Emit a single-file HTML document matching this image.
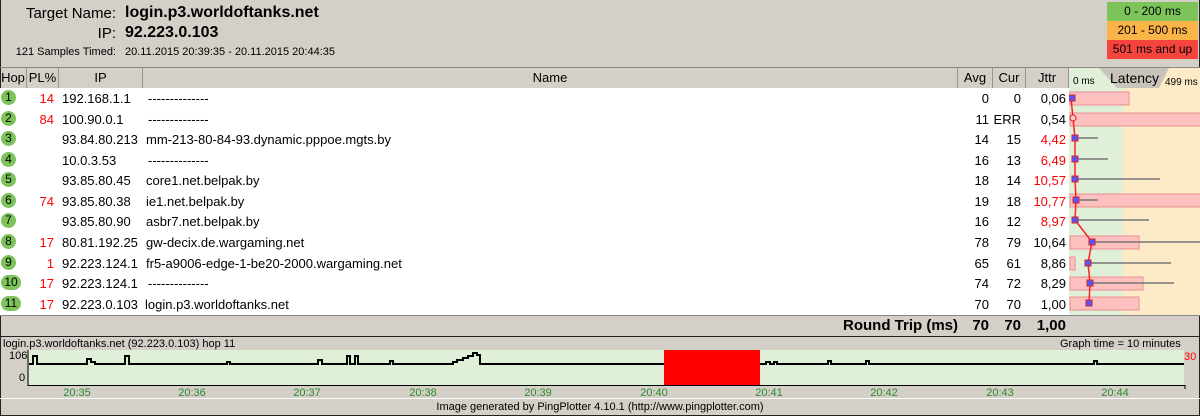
<!DOCTYPE html>
<html><head><meta charset="utf-8"><style>
*{margin:0;padding:0;box-sizing:border-box}
body{width:1200px;height:416px;overflow:hidden;background:#d4d0c8;font-family:"Liberation Sans",sans-serif;font-size:13px;color:#000;position:relative}
.a{position:absolute;white-space:nowrap}
.r{text-align:right}
.red{color:#f00}
.hop{position:absolute;left:1px;width:15px;height:15px;border-radius:8px;background:#7cc35a;font-size:12px;text-align:center;line-height:15px}
.hh{position:absolute;top:68px;height:20px;line-height:20px;border-right:1px solid #9a968e;text-align:center;font-size:13px}
</style></head><body>
<div class="a" style="left:0;top:0;width:1200px;height:416px;border:1px solid #222;border-top:0"></div>
<div class="a r" style="left:0;width:116px;top:5px;font-size:15px">Target Name:</div>
<div class="a" style="left:125px;top:4px;font-size:16px;font-weight:bold">login.p3.worldoftanks.net</div>
<div class="a r" style="left:0;width:116px;top:25px;font-size:15px">IP:</div>
<div class="a" style="left:125px;top:24px;font-size:16px;font-weight:bold">92.223.0.103</div>
<div class="a r" style="left:0;width:116px;top:46px;font-size:11px">121 Samples Timed:</div>
<div class="a" style="left:125px;top:46px;font-size:11px">20.11.2015 20:39:35 - 20.11.2015 20:44:35</div>
<div class="a" style="left:1107px;top:2px;width:91px;height:19px;background:#7cc35a;text-align:center;line-height:19px;font-size:12px">0 - 200 ms</div>
<div class="a" style="left:1107px;top:21px;width:91px;height:19px;background:#fbb447;text-align:center;line-height:19px;font-size:12px">201 - 500 ms</div>
<div class="a" style="left:1107px;top:40px;width:91px;height:19px;background:#f5443e;text-align:center;line-height:19px;font-size:12px">501 ms and up</div>
<div class="a" style="left:0;top:67px;width:1200px;height:1px;background:#888"></div>
<div class="hh" style="left:0;width:27px">Hop</div>
<div class="hh" style="left:27px;width:32px">PL%</div>
<div class="hh" style="left:59px;width:84px">IP</div>
<div class="hh" style="left:143px;width:815px">Name</div>
<div class="hh" style="left:958px;width:35px">Avg</div>
<div class="hh" style="left:993px;width:33px">Cur</div>
<div class="hh" style="left:1026px;width:43px">Jttr</div>
<div class="a" style="left:0;top:88px;width:1069px;height:227px;background:#fff"></div>
<svg class="a" style="left:1069px;top:68px" width="131" height="247">
<rect x="0" y="0" width="131" height="247" fill="#fdebc8"/>
<rect x="0" y="0" width="54" height="247" fill="#e0f0d8"/>
<polygon points="30,0 100,0 90,20 48,20" fill="#c8c4bc"/>
<text x="4" y="16" font-size="10" font-family="Liberation Sans">0 ms</text>
<text x="41" y="15" font-size="14" font-family="Liberation Sans">Latency</text>
<text x="96" y="17" font-size="10" font-family="Liberation Sans">499 ms</text>
<g fill="#ffc0c0" stroke="#e89090" stroke-width="1">
<rect x="1" y="24" width="59" height="13"/><rect x="1" y="45" width="131" height="13"/>
<rect x="1" y="126" width="131" height="13"/><rect x="1" y="168" width="69" height="13"/>
<rect x="1" y="189" width="5" height="13"/><rect x="1" y="209" width="73" height="13"/>
<rect x="1" y="229" width="69" height="13"/></g>
<g stroke="#777" stroke-width="1.5">
<line x1="6" y1="70" x2="29" y2="70"/><line x1="6" y1="91" x2="39" y2="91"/>
<line x1="6" y1="111" x2="91" y2="111"/><line x1="7" y1="132" x2="29" y2="132"/>
<line x1="6" y1="152" x2="80" y2="152"/><line x1="23" y1="174" x2="131" y2="174"/>
<line x1="19" y1="195" x2="102" y2="195"/><line x1="21" y1="215" x2="105" y2="215"/></g>
<polyline points="2,30 4,50 6,70 6,91 6,111 7,132 6,152 23,174 19,195 21,215 20,235" fill="none" stroke="#f22" stroke-width="1.5"/>
<g fill="#55f" stroke="#d22" stroke-width="1">
<rect x="0" y="27" width="6" height="6"/><circle cx="4" cy="50" r="3" fill="#fcc"/>
<rect x="3" y="67" width="6" height="6"/><rect x="3" y="88" width="6" height="6"/>
<rect x="3" y="108" width="6" height="6"/><rect x="4" y="129" width="6" height="6"/>
<rect x="3" y="149" width="6" height="6"/><rect x="20" y="171" width="6" height="6"/>
<rect x="16" y="192" width="6" height="6"/><rect x="18" y="212" width="6" height="6"/>
<rect x="17" y="232" width="6" height="6"/></g>
</svg>
<div style="position:absolute;left:0;top:88px;width:1069px">
<div class="a" style="top:0;width:1069px;height:20px"><div class="hop" style="top:2px">1</div><div class="a r red" style="left:27px;width:27px;top:3px">14</div><div class="a" style="left:62px;top:3px">192.168.1.1</div><div class="a" style="left:148px;top:3px">--------------</div><div class="a r" style="left:958px;width:31px;top:3px">0</div><div class="a r" style="left:993px;width:28px;top:3px">0</div><div class="a r" style="left:1026px;width:40px;top:3px">0,06</div></div>
<div class="a" style="top:20.5px;width:1069px;height:20px"><div class="hop" style="top:2px">2</div><div class="a r red" style="left:27px;width:27px;top:3px">84</div><div class="a" style="left:62px;top:3px">100.90.0.1</div><div class="a" style="left:148px;top:3px">--------------</div><div class="a r" style="left:958px;width:31px;top:3px">11</div><div class="a r" style="left:993px;width:28px;top:3px">ERR</div><div class="a r" style="left:1026px;width:40px;top:3px">0,54</div></div>
<div class="a" style="top:41px;width:1069px;height:20px"><div class="hop" style="top:2px">3</div><div class="a" style="left:62px;top:3px">93.84.80.213</div><div class="a" style="left:146px;top:3px">mm-213-80-84-93.dynamic.pppoe.mgts.by</div><div class="a r" style="left:958px;width:31px;top:3px">14</div><div class="a r" style="left:993px;width:28px;top:3px">15</div><div class="a r red" style="left:1026px;width:40px;top:3px">4,42</div></div>
<div class="a" style="top:61.5px;width:1069px;height:20px"><div class="hop" style="top:2px">4</div><div class="a" style="left:62px;top:3px">10.0.3.53</div><div class="a" style="left:148px;top:3px">--------------</div><div class="a r" style="left:958px;width:31px;top:3px">16</div><div class="a r" style="left:993px;width:28px;top:3px">13</div><div class="a r red" style="left:1026px;width:40px;top:3px">6,49</div></div>
<div class="a" style="top:82px;width:1069px;height:20px"><div class="hop" style="top:2px">5</div><div class="a" style="left:62px;top:3px">93.85.80.45</div><div class="a" style="left:146px;top:3px">core1.net.belpak.by</div><div class="a r" style="left:958px;width:31px;top:3px">18</div><div class="a r" style="left:993px;width:28px;top:3px">14</div><div class="a r red" style="left:1026px;width:40px;top:3px">10,57</div></div>
<div class="a" style="top:102.5px;width:1069px;height:20px"><div class="hop" style="top:2px">6</div><div class="a r red" style="left:27px;width:27px;top:3px">74</div><div class="a" style="left:62px;top:3px">93.85.80.38</div><div class="a" style="left:146px;top:3px">ie1.net.belpak.by</div><div class="a r" style="left:958px;width:31px;top:3px">19</div><div class="a r" style="left:993px;width:28px;top:3px">18</div><div class="a r red" style="left:1026px;width:40px;top:3px">10,77</div></div>
<div class="a" style="top:123px;width:1069px;height:20px"><div class="hop" style="top:2px">7</div><div class="a" style="left:62px;top:3px">93.85.80.90</div><div class="a" style="left:146px;top:3px">asbr7.net.belpak.by</div><div class="a r" style="left:958px;width:31px;top:3px">16</div><div class="a r" style="left:993px;width:28px;top:3px">12</div><div class="a r red" style="left:1026px;width:40px;top:3px">8,97</div></div>
<div class="a" style="top:144px;width:1069px;height:20px"><div class="hop" style="top:2px">8</div><div class="a r red" style="left:27px;width:27px;top:3px">17</div><div class="a" style="left:62px;top:3px">80.81.192.25</div><div class="a" style="left:146px;top:3px">gw-decix.de.wargaming.net</div><div class="a r" style="left:958px;width:31px;top:3px">78</div><div class="a r" style="left:993px;width:28px;top:3px">79</div><div class="a r" style="left:1026px;width:40px;top:3px">10,64</div></div>
<div class="a" style="top:164.5px;width:1069px;height:20px"><div class="hop" style="top:2px">9</div><div class="a r red" style="left:27px;width:27px;top:3px">1</div><div class="a" style="left:62px;top:3px;width:81px;overflow:hidden">92.223.124.1</div><div class="a" style="left:146px;top:3px">fr5-a9006-edge-1-be20-2000.wargaming.net</div><div class="a r" style="left:958px;width:31px;top:3px">65</div><div class="a r" style="left:993px;width:28px;top:3px">61</div><div class="a r" style="left:1026px;width:40px;top:3px">8,86</div></div>
<div class="a" style="top:185px;width:1069px;height:20px"><div class="hop" style="top:2px;width:20px">10</div><div class="a r red" style="left:27px;width:27px;top:3px">17</div><div class="a" style="left:62px;top:3px;width:80px;overflow:hidden">92.223.124.1</div><div class="a" style="left:148px;top:3px">--------------</div><div class="a r" style="left:958px;width:31px;top:3px">74</div><div class="a r" style="left:993px;width:28px;top:3px">72</div><div class="a r" style="left:1026px;width:40px;top:3px">8,29</div></div>
<div class="a" style="top:205.5px;width:1069px;height:20px"><div class="hop" style="top:2px;width:20px">11</div><div class="a r red" style="left:27px;width:27px;top:3px">17</div><div class="a" style="left:62px;top:3px">92.223.0.103</div><div class="a" style="left:145px;top:3px">login.p3.worldoftanks.net</div><div class="a r" style="left:958px;width:31px;top:3px">70</div><div class="a r" style="left:993px;width:28px;top:3px">70</div><div class="a r" style="left:1026px;width:40px;top:3px">1,00</div></div>
</div>
<div class="a" style="left:0;top:315px;width:1200px;height:1px;background:#888"></div>
<div class="a" style="left:740px;top:317px;width:218px;text-align:right;font-size:15px;font-weight:bold">Round Trip (ms)</div>
<div class="a r" style="left:958px;width:31px;top:317px;font-size:15px;font-weight:bold">70</div>
<div class="a r" style="left:993px;width:28px;top:317px;font-size:15px;font-weight:bold">70</div>
<div class="a r" style="left:1026px;width:40px;top:317px;font-size:15px;font-weight:bold">1,00</div>
<div class="a" style="left:0;top:336px;width:1200px;height:1px;background:#222"></div>
<div class="a" style="left:3px;top:338px;font-size:11px">login.p3.worldoftanks.net (92.223.0.103) hop 11</div>
<div class="a" style="left:1060px;top:338px;font-size:11px">Graph time = 10 minutes</div>
<div class="a" style="left:9px;top:350px;font-size:11px">106</div>
<div class="a" style="left:19px;top:372px;font-size:11px">0</div>
<div class="a red" style="left:1184px;top:351px;font-size:11px">30</div>
<svg class="a" style="left:0;top:348px" width="1200" height="50">
<rect x="29" y="2" width="1155" height="36" fill="#e0f0d8"/>
<rect x="664" y="2" width="96" height="36" fill="#f00"/>
<line x1="28" y1="2" x2="28" y2="38" stroke="#000"/>
<line x1="28" y1="37.5" x2="1185" y2="37.5" stroke="#000"/>
<line x1="1185" y1="37" x2="1185" y2="41" stroke="#000"/>
<polyline fill="none" stroke="#000" stroke-width="2" points="29,16 33,16 33,8 37,8 37,16 87,16 87,11 91,11 91,14 95,14 95,16 125,16 125,8 129,8 129,16 227,16 227,14 230,14 230,16 318,16 318,12 322,12 322,16 347,16 347,8 350,8 350,16 355,16 355,8 358,8 358,16 390,16 390,13 393,13 393,16 453,16 453,14 457,14 457,12 463,12 463,10 468,10 468,8 473,8 473,5 477,5 477,7 480,7 480,16 664,16"/>
<polyline fill="none" stroke="#000" stroke-width="2" points="760,16 766,16 766,14 770,14 770,16 774,16 774,14 777,14 777,16 828,16 828,13 831,13 831,16 866,16 866,13 869,13 869,16 1094,16 1094,13 1097,13 1097,16 1184,16"/>
<g fill="#2a8a2a" font-size="11" font-family="Liberation Sans" text-anchor="middle">
<text x="77" y="48">20:35</text><text x="192" y="48">20:36</text><text x="307" y="48">20:37</text><text x="423" y="48">20:38</text><text x="538" y="48">20:39</text><text x="654" y="48">20:40</text><text x="769" y="48">20:41</text><text x="884" y="48">20:42</text><text x="1000" y="48">20:43</text><text x="1115" y="48">20:44</text></g>
</svg>
<div class="a" style="left:0;top:398px;width:1200px;height:1px;background:#fff"></div>
<div class="a" style="left:0;top:401px;width:1200px;text-align:center;font-size:11px">Image generated by PingPlotter 4.10.1 (http://www.pingplotter.com)</div>
</body></html>
